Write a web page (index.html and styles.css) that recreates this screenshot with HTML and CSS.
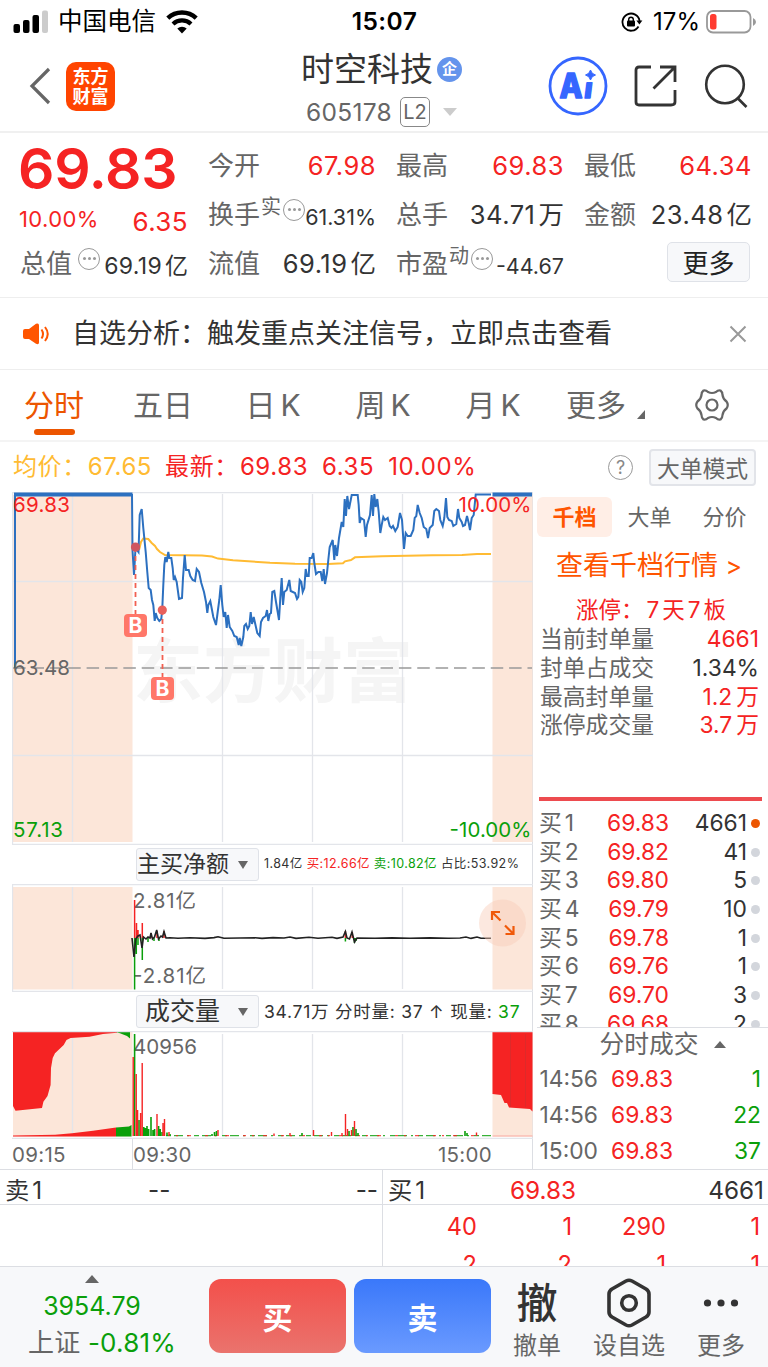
FILE: index.html
```html
<!DOCTYPE html>
<html lang="zh-CN">
<head>
    <meta charset="UTF-8">
    <meta name="viewport" content="width=device-width, initial-scale=1.0">
    <title>时空科技 605178</title>
    <link rel="stylesheet" href="styles.css">
</head>
<body>

<div class="status-bar">
    <div class="status-left">
        <svg width="36" height="24" viewBox="0 0 36 24">
            <rect x="0.5" y="14" width="6.5" height="9" rx="2"/>
            <rect x="10" y="10" width="6.5" height="13" rx="2"/>
            <rect x="19.5" y="5" width="6.5" height="18" rx="2"/>
            <rect x="29" y="0.5" width="6" height="22.5" rx="2" fill="#ccc"/>
        </svg>
        <span class="carrier">中国电信</span>
        <svg class="wifi" width="32" height="24" viewBox="0 0 32 24" fill="none" stroke="#000">
            <path d="M1.8 8.2A20.5 20.5 0 0 1 30.2 8.2" stroke-width="4.4"/>
            <path d="M7 14A13 13 0 0 1 25 14" stroke-width="4.2"/>
            <path d="M16 23.5L11.3 18.6A7 7 0 0 1 20.7 18.6Z" fill="#000" stroke="none"/>
        </svg>
    </div>
    <div class="clock">15:07</div>
    <div class="status-right">
        <svg width="22" height="20" viewBox="0 0 22 20" fill="none" stroke="#000" stroke-width="1.8">
            <path d="M17.5 14.5A8.6 8.6 0 1 1 18.6 9"/>
            <path d="M15.4 8.5H21.4L18.4 12.5Z" fill="#000" stroke="none"/>
            <rect x="6" y="8.6" width="8" height="6" rx="1" fill="#000" stroke="none"/>
            <path d="M7.7 9V7.6A2.3 2.3 0 0 1 12.3 7.6V9" stroke-width="1.4"/>
        </svg>
        <span class="percent">17%</span>
        <svg width="51" height="24" viewBox="0 0 51 24">
            <rect x="1" y="1" width="43.5" height="21.5" rx="6" fill="none" stroke="#999" stroke-width="1.8"/>
            <rect x="4" y="4" width="6.5" height="15.5" rx="2.5" fill="#ff3b30"/>
            <path d="M47 8Q50 9.500 50 12T47 16Z" fill="#999"/>
        </svg>
    </div>
</div>

<div class="header">
    <div class="header-left">
        <svg width="22" height="38" viewBox="0 0 22 38" fill="none" stroke="#666" stroke-width="3.2">
            <path d="M20 2L3 19L20 36"/>
        </svg>
        <div class="logo">东方<br>财富</div>
    </div>
    <div class="title">
        <div class="stock-name">时空科技<span class="badge">企</span></div>
        <div class="stock-code">605178<span class="level">L2</span><span class="arrow"></span></div>
    </div>
    <div class="header-right">
        <svg class="ai" width="60" height="60" viewBox="0 0 60 60">
            <circle cx="30" cy="30" r="28" fill="none" stroke="#3566ff" stroke-width="2.8"/>
            <text x="11.500" y="41.500" font-size="34" textLength="23" lengthAdjust="spacingAndGlyphs">A</text>
            <text x="0" y="0" font-size="28" transform="translate(35.500 42) skewX(-7)">ı</text>
            <path d="M42.500 14Q43.500 18 47.500 19Q43.500 20 42.500 24Q41.500 20 37.500 19Q41.500 18 42.500 14Z" stroke-width="1"/>
        </svg>
        <svg width="44" height="44" viewBox="0 0 44 44" fill="none" stroke="#333" stroke-width="2.8">
            <path d="M17 3H5Q2 3 2 6V38Q2 41 5 41H37Q41 41 41 38V26"/>
            <path d="M26 3H41V18M41 3L19.500 24.500"/>
        </svg>
        <svg width="44" height="44" viewBox="0 0 44 44" fill="none" stroke="#333" stroke-width="2.600">
            <circle cx="21" cy="20.500" r="18.800"/>
            <path d="M33 33.500L42.500 43"/>
        </svg>
    </div>
</div>

<div class="quote">
    <div class="quote-main">
        <div class="price">69.83</div>
        <div class="change"><span>10.00%</span><span class="diff">6.35</span></div>
        <div class="cell"><span class="label">总值</span><i class="dots left-gap"></i><span class="value small cap">69.19<em>亿</em></span></div>
    </div>
    <div class="quote-grid">
        <div class="cell"><span class="label">今开</span><span class="value red">67.98</span></div>
        <div class="cell"><span class="label">最高</span><span class="value red">69.83</span></div>
        <div class="cell"><span class="label">最低</span><span class="value red">64.34</span></div>
        <div class="cell"><span class="label">换手<sup>实</sup></span><i class="dots"></i><span class="value small">61.31%</span></div>
        <div class="cell"><span class="label">总手</span><span class="value">34.71<em>万</em></span></div>
        <div class="cell"><span class="label">金额</span><span class="value">23.48<em>亿</em></span></div>
        <div class="cell"><span class="label">流值</span><span class="value">69.19<em>亿</em></span></div>
        <div class="cell"><span class="label">市盈<sup>动</sup></span><i class="dots"></i><span class="value small">-44.67</span></div>
        <div class="cell end"><button class="more-button">更多</button></div>
    </div>
</div>

<div class="notice">
    <svg width="27" height="22" viewBox="0 0 27 22">
        <path d="M0 8Q0 6 2 6H6L13 0.800Q16 -0.500 16 2.500V19.500Q16 22 13 20.800L6 16H2Q0 16 0 14Z" fill="#ff5500"/>
        <path d="M18.500 6.500Q21.500 11 18.500 15.500M22 4Q27.500 11 22 18" fill="none" stroke="#ff5500" stroke-width="2"/>
    </svg>
    <span class="notice-text">自选分析：触发重点关注信号，立即点击查看</span>
    <svg width="18" height="18" viewBox="0 0 18 18" stroke="#999" stroke-width="2"><path d="M1.500 1.500L16.500 16.500M16.500 1.500L1.500 16.500"/></svg>
</div>

<div class="tabs">
    <div class="tab active">分时</div>
    <div class="tab">五日</div>
    <div class="tab">日<b>K</b></div>
    <div class="tab">周<b>K</b></div>
    <div class="tab">月<b>K</b></div>
    <div class="tab more">更多<i class="corner"></i></div>
    <svg width="36" height="36" viewBox="-18 -18 36 36" fill="none" stroke="#666" stroke-width="2.200" stroke-linejoin="round">
        <path d="M-8.500 -14.500Q-6 -15 -4 -13Q0 -11 4 -13Q6 -15 8.500 -14.500Q10.500 -13 10.500 -10Q11 -6 14.500 -3.500Q17 0 14.500 3.500Q11 6 10.500 10Q10.500 13 8.500 14.500Q6 15 4 13Q0 11 -4 13Q-6 15 -8.500 14.500Q-10.500 13 -10.500 10Q-11 6 -14.500 3.500Q-17 0 -14.500 -3.500Q-11 -6 -10.500 -10Q-10.500 -13 -8.500 -14.500Z"/>
        <circle r="5.500"/>
    </svg>
</div>

<div class="legend">
    <span class="avg">均价：</span><span class="avg num">67.65</span>
    <span class="red">最新：</span><span class="red num">69.83</span>
    <span class="red num">6.35</span>
    <span class="red num">10.00%</span>
    <span class="help">?</span>
    <button class="mode-button">大单模式</button>
</div>

<div class="main">
    <div class="charts">
        <!-- 分时走势 -->
        <svg class="chart" width="521" height="353" viewBox="12 492 521 353">
            <rect x="13" y="495" width="119.500" height="347" fill="#fce6d9"/>
            <rect x="492.500" y="495" width="40" height="347" fill="#fce6d9"/>
            <text class="watermark" x="133" y="697" textLength="280">东方财富</text>
            <path d="M12 492.500H533M12 844.500H533M12 581.500H533M12 755.500H533M12.500 492V845M72.500 494V842M222.500 494V842M312.500 494V842M402.500 494V842" class="grid"/>
            <path d="M12 668H532" stroke="#999" stroke-width="1.400" stroke-dasharray="12.500 5.870" stroke-dashoffset="17.250"/>
            <polyline class="avg-line" points="139,550 141,542 143.3,538.500 148.3,539 151.7,543 155,546 157,549 160,552 165,555 202,555.600 212,556.500 218,558.600 233,560.300 270,562.700 295,563.700 328,564 343,563.300 345,561.300 351,560 355,557.300 382,556.300 432,555.300 462,555 477,554 491,554"/>
            <path d="M14 494.500H132.500M492.500 494.500H532" stroke="#2c70c0" stroke-width="4"/>
            <polyline class="price-line" points="15,668 15,495 132,495 132.500,550 134,575 135.5,548 138.500,552 139.7,515 141.7,509 143.3,528 145.7,552 147.3,572 148.7,588 150.7,590 152,600 153.3,605 154.7,621 155.7,613 157.3,618 159.3,621 161.3,619 162.3,608 163.3,585 164.3,565 165.3,557 166.7,562 168.3,552 169.3,558 171.3,558 172.7,568 173.7,580 175,577 176.7,582 179,599 182,598 183,578 184.7,555 186,570 188.7,570 190.3,576 192.7,580 195,581 196.7,569 199,572 201.3,583 204,592 206,602 207.3,613 208.3,605 210.3,601 212,610 213.3,617 216,625 217.7,612 219.3,600 220.7,585 222.3,605 223.7,617 225.3,612 226.7,628 228,615 229.7,627 232.3,631 234.3,636 236.7,637 238.7,645 239.7,638 241.3,646 243.3,637 244.3,626 246,624 247.7,629 249.3,626 250.7,612 252,624 253.7,617 255.7,626 257.3,633 259.7,636 261,622 263,618 265.7,616 267,610 268.3,621 269.7,614 271,613 272.3,592 274.3,591 276,602 277.7,612 279,620 280.3,598 281.7,578 283,605 284.3,592 286.7,590 289.3,580 290.7,591 295,593 297,599 298.3,597 299.7,580 301.3,582 302.7,592 304.3,588 305.7,569 307,576 308.7,576 309.7,558 311.7,558 313.3,553 314.3,563 316,574 318.3,572 320.7,572 322.3,581 323.7,569 325,584 327,573 328.3,560 329.7,547 332.7,540 334.3,560 335.3,545 337,556 339,538 341.7,522 343.3,527 344.7,499 346,516 347.3,496 349,509 351.7,495 357.7,495 358.7,505 359.7,523 361,518 364,520 365.7,537 367,525 370,515 371.7,495 373,516 374.3,494 375.7,507 377.3,499 378.7,512 380.3,533 381.7,525 383.3,517 385,520 387.7,518 389.7,526 391.500,528 393,526 395.3,531 397.7,527 400,513 402,520 404,549 405.7,533 407.7,536 410.7,536 413.3,530 414.7,518 416.3,516 417.7,505 419.7,513 421.7,518 423.7,527 426.3,529 428,538 429.7,528 432.7,525 434.3,511 436.3,509 439,511 440.3,520 442.7,526 444.3,518 446,498 447.3,517 449,520 451.7,521 453.3,526 456.3,524 458,509 459.3,518 461.7,522 463,526 465,525 467,516 468.7,523 470,530 471.7,518 473.7,515 475.7,494.500 491,494.500"/>
            <path d="M135.500 547V614M162.500 610V677" stroke="#f25f50" stroke-width="1.800" stroke-dasharray="5 4"/>
            <circle cx="135.500" cy="547" r="4.600" fill="#cf5560"/>
            <circle cx="162.300" cy="610" r="4.600" fill="#e8605c"/>
            <rect x="124" y="614" width="23" height="23" rx="4" fill="#ff7769"/>
            <rect x="151" y="677" width="23" height="23" rx="4" fill="#ff7769"/>
            <text class="buy-mark" x="135.500" y="633">B</text>
            <text class="buy-mark" x="162.500" y="696">B</text>
            <text x="13" y="512" fill="#f52323" textLength="57">69.83</text>
            <text x="13" y="674.500" fill="#666" textLength="57">63.48</text>
            <text x="13" y="836.500" fill="#0a9f0a" textLength="50">57.13</text>
            <text x="531.500" y="512" fill="#f52323" text-anchor="end" textLength="73">10.00%</text>
            <text x="531.500" y="836.500" fill="#0a9f0a" text-anchor="end" textLength="82">-10.00%</text>
        </svg>

        <div class="indicator">
            <div class="picker"><span>主买净额</span><i></i></div>
            <div class="figures tiny">1.84亿 <span class="red">买:12.66亿</span> <span class="green">卖:10.82亿</span> 占比:53.92%</div>
        </div>
        <!-- 主买净额 -->
        <svg class="chart" width="521" height="108" viewBox="12 884 521 108">
            <rect x="13" y="887" width="119.500" height="102.500" fill="#fce6d9"/>
            <rect x="492.500" y="887" width="40" height="102.500" fill="#fce6d9"/>
            <path d="M12 884.500H533M12 991.500H533M12.500 884V992M72.500 887V989M222.500 887V989M312.500 887V989M402.500 887V989" class="grid"/>
            <text x="133" y="908" fill="#666" textLength="63">2.81亿</text>
            <text x="133" y="983" fill="#666" textLength="73">-2.81亿</text>
            <path d="M134.600 900V938M136.500 923V938M138 930V938M142.300 923V938M151 933V938M157 931V938M164 931V938M345.400 931V938M352.300 932V938" stroke="#f52323" stroke-width="1.500"/>
            <path d="M134.600 938V989.500M136.300 938V954M138 938V945M142.300 938V960M148 938V942M154 938V941M159 938V941M345.400 938V941.500M354.500 938V943M356 938V941" stroke="#0a9f0a" stroke-width="1.500"/>
            <polyline fill="none" stroke="#222" stroke-width="1.600" points="132,938 134,957 135.7,939 138,936 140,935 142,948 143.500,937 146,939 148,937 150,938 151,933 152.500,939 154.500,937 156.700,930 158.500,939 161,936 162.500,937 164,931.500 166,938 170,937.800 178,938.300 190,937.800 205,938.400 214,937.600 218,936.800 224,938.300 240,938 255,937.800 262,938.400 273,937.600 284,938 290,937 296,938.400 309,937.300 318,938.200 332,937.200 337,938.400 343,937 345.400,931.500 347,938 349.500,939 352,932 354.500,942 357,938 375,938.300 392,937.900 410,938.300 430,937.900 448,938.300 460,938 466,937 471,938.400 477,937 481,938.300 491,938.300"/>
            <circle cx="502.500" cy="923" r="23.500" fill="#f9cdb8" fill-opacity="0.45"/>
            <path d="M492 920V912H500M492.500 912.500L500.500 920.500M513.500 926V934H505.500M513 933.500L505 925.500" fill="none" stroke="#f0590a" stroke-width="2.200"/>
        </svg>

        <div class="indicator">
            <div class="picker volume"><span>成交量</span><i></i></div>
            <div class="figures">34.71万 分时量: 37 ↑ 现量: <span class="green">37</span></div>
        </div>
        <!-- 成交量 -->
        <svg class="chart" width="521" height="108" viewBox="12 1031 521 108">
            <rect x="13" y="1032" width="119.500" height="104.500" fill="#fce6d9"/>
            <rect x="492.500" y="1032" width="40" height="104.500" fill="#fce6d9"/>
            <path d="M72.500 1034V1136M222.500 1034V1136M312.500 1034V1136M402.500 1034V1136" class="grid"/>
            <path fill="#f52323" d="M13 1032V1106L15.500 1110.700L42 1108L43.400 1101.700L47.500 1096L50.600 1085L51 1068L52.700 1058L55 1053.300L63.700 1045L66.500 1040L70.600 1038L89.500 1036.700L103 1034L117 1032.700V1032Z"/>
            <path fill="#0a9f0a" d="M116 1032H130V1038.500L127 1036L120 1033.300Z"/>
            <path fill="#f52323" d="M13 1136.500V1135.500L55 1134.700L72 1133.300L93 1130.700L116 1127.500V1136.500Z"/>
            <path fill="#0a9f0a" d="M116 1136.500V1127.500L129 1126.500L131.500 1125V1136.500Z"/>
            <path fill="#f52323" d="M492.500 1032H532.500V1111.500L530 1109L509 1107.500L507 1103L504.500 1103L501 1095L492.500 1094Z"/>
            <path d="M510.500 1034V1107M525.500 1034V1107" stroke="#dd2a2a"/>
            <path d="M492.500 1136H532.500" stroke="#f9a9a0"/>
            <path d="M12 1031.500H533M12 1138.500H533" class="grid"/>
            <text x="133" y="1053.500" fill="#666" textLength="64">40956</text>
            <path d="M166 1135.700H491" stroke="#0a9f0a" stroke-dasharray="5 3 9 4 2 5"/>
            <path d="M176 1135.700H480" stroke="#f52323" stroke-dasharray="2 9 4 14 3 6"/>
            <path stroke="#0a9f0a" stroke-width="1.600" d="M134.600 1136V1034M139 1136V1120M143.800 1136V1127M145.400 1136V1128M147 1136V1126M148.600 1136V1129M151 1136V1117M153 1136V1130M154.600 1136V1129M158.600 1136V1126M160.200 1136V1129M162 1136V1132M167 1136V1132.500M170 1136V1134M212 1136V1134M214.500 1136V1132M216.500 1136V1131M302 1136V1133M349 1136V1131M353 1136V1127M356 1136V1129M358 1136V1133M465 1136V1131M467 1136V1133"/>
            <path stroke="#f52323" stroke-width="1.400" d="M133.200 1136V1057M136.200 1136V1074M137.600 1136V1110M140.600 1136V1113M142.200 1136V1063M157 1136V1114M163 1136V1123M164.500 1136V1119M169 1136V1132M218 1136V1130M274 1136V1133.500M290 1136V1133M313.500 1136V1130M331.500 1136V1132M342 1136V1133M345.500 1136V1114M347.500 1136V1129M351.500 1136V1130M354.500 1136V1121M476.500 1136V1132.500"/>
        </svg>

        <div class="time-axis"><span class="pre">09:15</span><span class="open">09:30</span><span class="close">15:00</span></div>
    </div>

    <div class="panel">
        <div class="panel-tabs"><span class="on">千档</span><span>大单</span><span>分价</span></div>
        <div class="link">查看千档行情 <b>&gt;</b></div>
        <div class="limit">涨停：<b>7</b>天<b>7</b>板</div>
        <div class="stats">
            <div><span>当前封单量</span><span class="red">4661</span></div>
            <div><span>封单占成交</span><span class="dark">1.34%</span></div>
            <div><span>最高封单量</span><span class="red">1.2<em>万</em></span></div>
            <div><span>涨停成交量</span><span class="red">3.7<em>万</em></span></div>
        </div>
        <div class="levels">
            <div class="level-row hot"><span>买<em>1</em></span><span class="red">69.83</span><span class="dark">4661</span><i></i></div>
            <div class="level-row"><span>买<em>2</em></span><span class="red">69.82</span><span class="dark">41</span><i></i></div>
            <div class="level-row"><span>买<em>3</em></span><span class="red">69.80</span><span class="dark">5</span><i></i></div>
            <div class="level-row"><span>买<em>4</em></span><span class="red">69.79</span><span class="dark">10</span><i></i></div>
            <div class="level-row"><span>买<em>5</em></span><span class="red">69.78</span><span class="dark">1</span><i></i></div>
            <div class="level-row"><span>买<em>6</em></span><span class="red">69.76</span><span class="dark">1</span><i></i></div>
            <div class="level-row"><span>买<em>7</em></span><span class="red">69.70</span><span class="dark">3</span><i></i></div>
            <div class="level-row"><span>买<em>8</em></span><span class="red">69.68</span><span class="dark">2</span><i></i></div>
        </div>
        <div class="trades">
            <div class="trades-title">分时成交<i></i></div>
            <div class="trade"><span>14:56</span><span class="red">69.83</span><span class="green">1</span></div>
            <div class="trade"><span>14:56</span><span class="red">69.83</span><span class="green">22</span></div>
            <div class="trade"><span>15:00</span><span class="red">69.83</span><span class="green">37</span></div>
        </div>
    </div>
</div>

<div class="book">
    <div class="side">
        <div class="best"><span>卖<em>1</em></span><span class="mid">--</span><span>--</span></div>
    </div>
    <div class="side buy">
        <div class="best"><span>买<em>1</em></span><span class="mid red">69.83</span><span>4661</span></div>
        <div class="queue">
            <span>40</span><span>1</span><span>290</span><span>1</span>
            <span>2</span><span>2</span><span>1</span><span>1</span>
        </div>
    </div>
</div>

<div class="bottom-bar">
    <div class="index">
        <i class="up"></i>
        <div class="green index-value">3954.79</div>
        <div class="index-name">上证 <span class="green">-0.81%</span></div>
    </div>
    <div class="trade-buttons">
        <button class="trade-button buy-button">买</button>
        <button class="trade-button sell-button">卖</button>
    </div>
    <div class="action"><span class="action-icon cancel">撤</span><span>撤单</span></div>
    <div class="action">
        <svg class="action-icon" width="46" height="50" viewBox="0 0 46 50" fill="none" stroke="#333" stroke-width="3.600" stroke-linejoin="round">
            <path d="M20 3Q23 1.500 26 3L40 11Q43 13 43 16V34Q43 37 40 39L26 47Q23 48.500 20 47L6 39Q3 37 3 34V16Q3 13 6 11Z"/>
            <circle cx="23" cy="25" r="7.300"/>
        </svg>
        <span>设自选</span>
    </div>
    <div class="action">
        <svg class="action-icon" width="36" height="50" viewBox="0 0 36 50" fill="#333">
            <circle cx="4.500" cy="25" r="3.600"/><circle cx="18" cy="25" r="3.600"/><circle cx="31.500" cy="25" r="3.600"/>
        </svg>
        <span>更多</span>
    </div>
</div>

</body>
</html>
```

FILE: styles.css
```css
* {
    box-sizing: border-box;
}
body {
    width: 768px;
    height: 1367px;
    margin: 0;
    overflow: hidden;
    background-color: #fff;
    color: #333;
    font-family: Inter, "Noto Sans CJK SC", sans-serif;
    font-weight: 400;
    line-height: 1;
}
em, i {
    font-style: normal;
}
b {
    font-weight: inherit;
}
button {
    padding: 0;
    font-family: inherit;
    cursor: pointer;
}
svg {
    display: block;
    flex: none;
}
.red {
    color: #f52323;
}
.green {
    color: #0a9f0a;
}
.dark {
    color: #333;
}

/* 状态栏 */
.status-bar {
    display: grid;
    grid-template-columns: 1fr auto 1fr;
    align-items: center;
    height: 44px;
    padding: 0 11px 1px 13px;
    color: #000;
    font-size: 24px;
}
.status-left, .status-right {
    display: flex;
    align-items: center;
}
.status-right {
    justify-content: flex-end;
}
.carrier {
    margin: 0 10px 0 9px;
    font-size: 24.5px;
}
.clock {
    margin-right: 1px;
    font-size: 24.5px;
    font-weight: 600;
    letter-spacing: 0.4px;
}
.percent {
    margin: 0 6px 0 10px;
    font-size: 24px;
}

/* 标题 */
.header {
    display: grid;
    grid-template-columns: 268px 1fr 268px;
    height: 89px;
    border-bottom: 2px solid #f0f0f0;
}
.header-left {
    display: flex;
    align-items: center;
    padding: 0 0 3px 29px;
}
.logo {
    width: 49px;
    height: 49px;
    margin-left: 15px;
    padding-top: 5px;
    border-radius: 10px;
    background-color: #ff4400;
    color: #fff;
    font-size: 18px;
    font-weight: 700;
    line-height: 20px;
    text-align: center;
}
.title {
    display: flex;
    flex-direction: column;
    align-items: center;
    padding: 6px 5px 0 0;
}
.stock-name {
    display: flex;
    align-items: center;
    height: 38px;
    font-size: 33px;
}
.badge {
    width: 25px;
    height: 25px;
    margin-left: 4px;
    border-radius: 50%;
    background-color: #6494ec;
    color: #fff;
    font-size: 15px;
    font-weight: 700;
    line-height: 24px;
    text-align: center;
}
.stock-code {
    display: flex;
    align-items: center;
    height: 32px;
    margin-top: 8px;
    color: #666;
    font-size: 24.5px;
    letter-spacing: 0.3px;
}
.level {
    width: 30px;
    height: 30px;
    margin: 0 13px 0 8px;
    border: 1.5px solid #888;
    border-radius: 5px;
    font-size: 20px;
    line-height: 28px;
    letter-spacing: 0;
    text-align: center;
}
.arrow {
    border: 7px solid transparent;
    border-top: 8px solid #ccc;
    border-bottom: 0;
}
.header-right {
    display: flex;
    align-items: center;
    justify-content: flex-end;
    gap: 26px;
    padding: 0 20px 3px 0;
}
.ai text, .ai path {
    fill: #3566ff;
    stroke: #3566ff;
    stroke-linejoin: round;
}
.ai text {
    font-weight: 800;
    stroke-width: 1.6;
}

/* 行情 */
.quote {
    display: grid;
    grid-template-columns: 168px 544px;
    gap: 20px;
    height: 165px;
    padding: 8px 16px 0 20px;
    border-bottom: 1px solid #eee;
}
.price {
    height: 56px;
    margin-left: -2px;
    color: #f52323;
    font-size: 57px;
    font-weight: 600;
    line-height: 55px;
    letter-spacing: -0.3px;
}
.change {
    display: flex;
    justify-content: space-between;
    height: 42px;
    margin-left: -1px;
    color: #f52323;
    font-size: 22px;
    line-height: 44px;
    letter-spacing: 0.4px;
}
.diff {
    font-size: 26px;
    line-height: 49px;
}
.quote-grid {
    display: grid;
    grid-template-columns: repeat(3, 168px);
    grid-auto-rows: 49px;
    column-gap: 20px;
}
.cell {
    display: flex;
    align-items: center;
    height: 49px;
    white-space: nowrap;
}
.cell.end {
    justify-content: flex-end;
}
.label {
    color: #666;
    font-size: 26px;
}
.label sup {
    position: relative;
    top: -10px;
    margin-left: 1px;
    font-size: 20px;
    line-height: 0;
    vertical-align: baseline;
}
.value {
    margin-left: auto;
    font-size: 25.5px;
    letter-spacing: 0.5px;
}
.value em {
    margin-left: 3px;
    letter-spacing: 0;
}
.value.small {
    padding-top: 6px;
    font-size: 21.5px;
    letter-spacing: 0;
}
.value.small.cap {
    font-size: 23px;
    letter-spacing: 0.3px;
}
.dots {
    display: flex;
    flex: none;
    align-items: center;
    justify-content: center;
    width: 22px;
    height: 22px;
    margin: 0 0 10px 2px;
    border: 1.6px solid #999;
    border-radius: 50%;
}
.dots::before {
    width: 3px;
    height: 3px;
    border-radius: 50%;
    background-color: #999;
    box-shadow: -5px 0 #999, 5px 0 #999;
    content: "";
}
.left-gap {
    margin-left: 6px;
}
.more-button {
    width: 83px;
    height: 40px;
    margin: 0 2px 4px 0;
    padding-bottom: 2px;
    border: 1.5px solid #dfe2e8;
    border-radius: 5px;
    background-color: #f7f8fa;
    color: #222;
    font-size: 26px;
}

/* 提示 */
.notice {
    display: flex;
    align-items: center;
    height: 72px;
    padding: 0 21px 0 23px;
    border-bottom: 1px solid #eee;
}
.notice-text {
    flex: 1;
    margin-left: 22px;
    font-size: 27px;
}

/* 周期 */
.tabs {
    display: flex;
    align-items: center;
    height: 72px;
    padding-right: 38px;
    border-bottom: 2px solid #f4f4f4;
    color: #666;
    font-size: 30px;
}
.tab {
    position: relative;
    width: 110px;
    text-align: center;
}
.tab b {
    margin-left: 5px;
    font-size: 30px;
}
.tab.active {
    width: 108px;
    color: #ec5500;
}
.tab.active::after {
    position: absolute;
    left: 34px;
    top: 39px;
    width: 41px;
    height: 6px;
    border-radius: 3px;
    background-color: #ec5500;
    content: "";
}
.tab.more {
    display: flex;
    align-items: flex-end;
    width: 83px;
    margin: 0 auto 0 18px;
}
.corner {
    margin-left: 11px;
    margin-bottom: 1px;
    border-left: 8px solid transparent;
    border-bottom: 9px solid #666;
}
.legend {
    display: flex;
    align-items: center;
    height: 50px;
    padding-left: 13px;
    font-size: 24px;
    letter-spacing: 0.6px;
}
.num {
    margin: 0 13px 0 1px;
}
.avg {
    color: #ffbb33;
}
.help {
    width: 25px;
    height: 25px;
    margin-left: auto;
    border: 1.6px solid #999;
    border-radius: 50%;
    color: #888;
    font-size: 18px;
    line-height: 23px;
    letter-spacing: 0;
    text-align: center;
}
.mode-button {
    width: 107px;
    height: 37px;
    margin: 0 12px 0 16px;
    padding-bottom: 3px;
    border: 2px solid #e2e4e9;
    border-radius: 4px;
    background-color: #f7f8fa;
    color: #666;
    font-size: 22.8px;
}

/* 图表 */
.main {
    display: flex;
    height: 678px;
    border-bottom: 1px solid #dcdee3;
}
.charts {
    width: 533px;
    padding-left: 12px;
    border-right: 1px solid #dcdee3;
}
.chart text {
    font-size: 20.5px;
}
.chart .watermark {
    fill: #f5f5f5;
    font-size: 70px;
    font-weight: 700;
}
.chart .buy-mark {
    fill: #fff;
    font-size: 21px;
    font-weight: 700;
    text-anchor: middle;
}
.grid {
    fill: none;
    stroke: #e3e5ea;
    stroke-width: 1.3;
}
.price-line {
    fill: none;
    stroke: #2c70c0;
    stroke-width: 2;
}
.avg-line {
    fill: none;
    stroke: #ffbb33;
    stroke-width: 2;
}
.indicator {
    display: flex;
    align-items: center;
    height: 39px;
    padding-left: 124px;
    white-space: nowrap;
}
.picker {
    display: flex;
    align-items: center;
    width: 123px;
    height: 33px;
    border: 1.5px solid #dfe2e8;
    border-radius: 3px;
    background-color: #f7f8fa;
    font-size: 23px;
}
.picker.volume {
    padding-left: 8px;
    font-size: 25px;
}
.picker i {
    margin: 0 10px 0 auto;
    border: 5px solid transparent;
    border-top: 8px solid #666;
    border-bottom: 0;
}
.figures {
    margin-left: 5px;
    font-size: 17.5px;
    letter-spacing: 0.75px;
}
.figures.tiny {
    font-size: 12.5px;
    letter-spacing: 0.4px;
}
.time-axis {
    display: flex;
    height: 30px;
    color: #666;
    font-size: 20.5px;
    line-height: 31px;
    letter-spacing: 0.3px;
}
.pre {
    width: 120px;
}
.open {
    border-left: 1px solid #dcdee3;
}
.close {
    margin: 0 40px 0 auto;
}

/* 右侧盘口 */
.panel {
    flex: 1;
    padding-left: 4px;
}
.panel-tabs {
    display: flex;
    height: 45px;
    padding-top: 5px;
    color: #666;
    font-size: 22px;
    line-height: 40px;
    text-align: center;
}
.panel-tabs span {
    width: 75px;
}
.panel-tabs .on {
    border-radius: 6px;
    background-color: #ffeee6;
    color: #ff5500;
    font-weight: 700;
}
.link {
    height: 57px;
    padding-left: 19px;
    color: #ff5500;
    font-size: 27px;
    line-height: 58px;
}
.link b {
    font-size: 25px;
}
.limit {
    height: 31px;
    padding-left: 39px;
    color: #f52323;
    font-size: 22.5px;
    line-height: 32px;
}
.limit b {
    margin: 0 3px;
}
.stats {
    height: 176px;
    margin: 0 6px 0 2px;
    padding: 0 3px 0 1px;
    border-bottom: 4px solid #ed4b4f;
    color: #666;
    font-size: 22.8px;
}
.stats div {
    display: flex;
    justify-content: space-between;
    height: 28.8px;
    line-height: 28.8px;
}
.stats em {
    margin-left: 4px;
}
.levels {
    height: 227px;
    padding: 8px 8px 0 2px;
    overflow: hidden;
    border-bottom: 1px solid #dcdee3;
    color: #666;
    font-size: 22.8px;
}
.level-row {
    display: grid;
    grid-template-columns: 50px 80px 1fr 9px;
    align-items: center;
    height: 28.7px;
    text-align: right;
}
.level-row span:first-child {
    text-align: left;
}
.level-row em, .best em {
    margin-left: 3px;
}
.level-row .dark {
    padding-right: 4px;
}
.level-row i {
    width: 9px;
    height: 9px;
    border-radius: 50%;
    background-color: #d3d6dc;
}
.level-row.hot i {
    background-color: #ec5500;
}
.trades {
    padding: 0 7px 0 2px;
    color: #666;
    font-size: 22.8px;
}
.trades-title {
    display: flex;
    align-items: center;
    justify-content: center;
    height: 33px;
    padding-left: 25px;
    font-size: 24.8px;
}
.trades-title i, .up {
    margin-left: 15px;
    border: 6px solid transparent;
    border-top: 0;
    border-bottom: 7px solid #666;
}
.trade {
    display: grid;
    grid-template-columns: 59px 75px 1fr;
    align-items: center;
    height: 36.2px;
    text-align: right;
}

/* 买卖队列 */
.book {
    display: flex;
    height: 96px;
    overflow: hidden;
    font-size: 24px;
}
.side {
    width: 382px;
}
.side.buy {
    width: 386px;
    border-left: 1px solid #dcdee3;
}
.best {
    display: grid;
    grid-template-columns: 60px 1fr 180px;
    align-items: center;
    height: 35px;
    padding: 6px 4px 0 5px;
    border-bottom: 1px solid #dcdee3;
    font-size: 24.3px;
}
.best span:last-child {
    text-align: right;
}
.best .mid {
    padding-left: 83px;
}
.buy .best .mid {
    padding-left: 62px;
}
.queue {
    display: grid;
    grid-template-columns: 94px 95px 94px 94px;
    grid-auto-rows: 38px;
    align-items: center;
    padding-top: 3px;
    color: #f52323;
    font-size: 23.6px;
    text-align: right;
}

/* 底部 */
.bottom-bar {
    display: flex;
    height: 101px;
    border-top: 1px solid #dcdee3;
    background-color: #f7f8fa;
}
.index {
    display: flex;
    flex: none;
    flex-direction: column;
    align-items: center;
    width: 184px;
    margin-right: 25px;
    padding-top: 8px;
    white-space: nowrap;
}
.up {
    margin: 0 0 11px;
    border-width: 0 7px 8px;
}
.index-value {
    margin-bottom: 11px;
    font-size: 25px;
}
.index-name {
    padding-left: 20px;
    color: #666;
    font-size: 26px;
    letter-spacing: 0.2px;
}
.trade-buttons {
    display: flex;
    flex: none;
    gap: 8px;
    padding-top: 12px;
}
.trade-button {
    width: 137px;
    height: 74px;
    border: 0;
    border-radius: 12px;
    color: #fff;
    font-size: 30px;
    font-weight: 700;
}
.buy-button {
    background-image: linear-gradient(#f3504b, #ea736d);
}
.sell-button {
    background-image: linear-gradient(#3a78fa, #6a9aff);
}
.action {
    display: flex;
    flex: none;
    flex-direction: column;
    align-items: center;
    width: 92px;
    padding-top: 11px;
    color: #666;
    font-size: 24px;
}
.action-icon {
    height: 50px;
    margin-bottom: 6px;
}
.cancel {
    color: #333;
    font-size: 41px;
    font-weight: 500;
    line-height: 50px;
}
```
